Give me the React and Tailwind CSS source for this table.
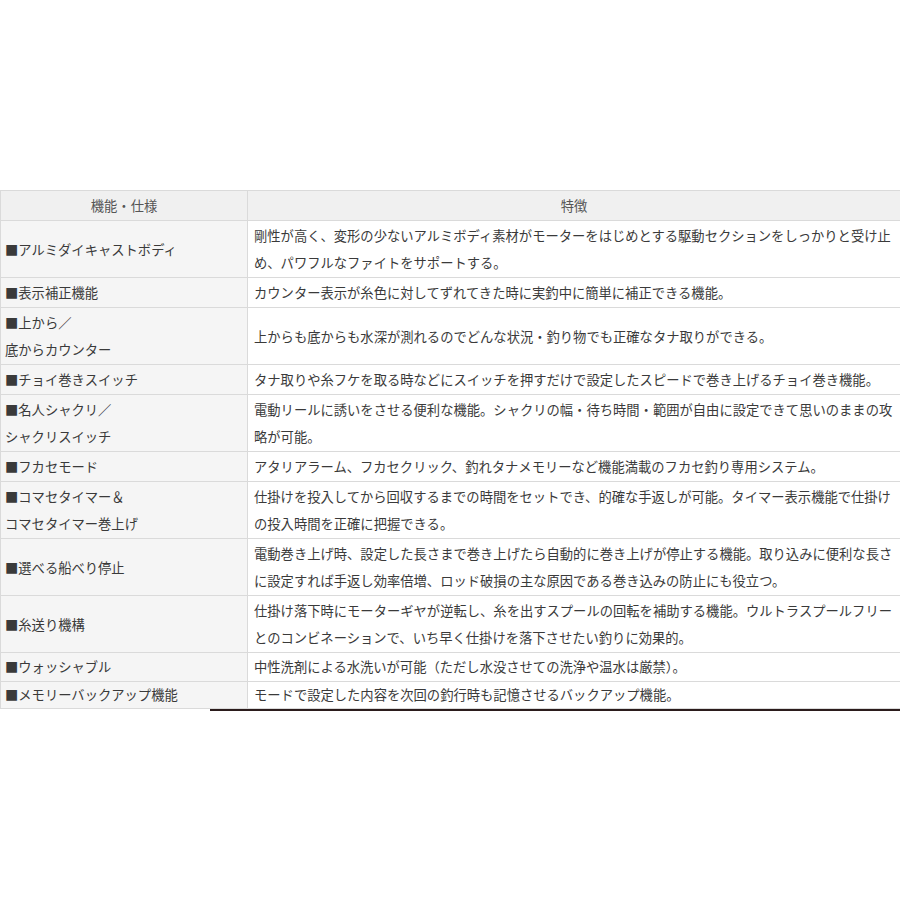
import React from "react";

const rows = [
  [["■アルミダイキャストボディ"], ["剛性が高く、変形の少ないアルミボディ素材がモーターをはじめとする駆動セクションをしっかりと受け止", "め、パワフルなファイトをサポートする。"]],
  [["■表示補正機能"], ["カウンター表示が糸色に対してずれてきた時に実釣中に簡単に補正できる機能。"]],
  [["■上から／", "底からカウンター"], ["上からも底からも水深が測れるのでどんな状況・釣り物でも正確なタナ取りができる。"]],
  [["■チョイ巻きスイッチ"], ["タナ取りや糸フケを取る時などにスイッチを押すだけで設定したスピードで巻き上げるチョイ巻き機能。"]],
  [["■名人シャクリ／", "シャクリスイッチ"], ["電動リールに誘いをさせる便利な機能。シャクリの幅・待ち時間・範囲が自由に設定できて思いのままの攻", "略が可能。"]],
  [["■フカセモード"], ["アタリアラーム、フカセクリック、釣れタナメモリーなど機能満載のフカセ釣り専用システム。"]],
  [["■コマセタイマー＆", "コマセタイマー巻上げ"], ["仕掛けを投入してから回収するまでの時間をセットでき、的確な手返しが可能。タイマー表示機能で仕掛け", "の投入時間を正確に把握できる。"]],
  [["■選べる船べり停止"], ["電動巻き上げ時、設定した長さまで巻き上げたら自動的に巻き上げが停止する機能。取り込みに便利な長さ", "に設定すれば手返し効率倍増、ロッド破損の主な原因である巻き込みの防止にも役立つ。"]],
  [["■糸送り機構"], ["仕掛け落下時にモーターギヤが逆転し、糸を出すスプールの回転を補助する機能。ウルトラスプールフリー", "とのコンビネーションで、いち早く仕掛けを落下させたい釣りに効果的。"]],
  [["■ウォッシャブル"], ["中性洗剤による水洗いが可能（ただし水没させての洗浄や温水は厳禁）。"]],
  [["■メモリーバックアップ機能"], ["モードで設定した内容を次回の釣行時も記憶させるバックアップ機能。"]],
];

function Lines({ lines }) {
  return lines.map((l, i) => (
    <div key={i} className="whitespace-nowrap">
      {l}
    </div>
  ));
}

export default function App() {
  return (
    <div
      className="w-[900px] h-[900px] bg-white overflow-hidden pt-[190px] text-[#3a3a3a] text-[13.3px] leading-[27px]"
      style={{ fontFamily: '"Noto Sans CJK JP", "Noto Sans", sans-serif' }}
    >
      <table className="table-fixed w-[900px] border-collapse">
        <colgroup>
          <col className="w-[247px]" />
          <col className="w-[653px]" />
        </colgroup>
        <thead>
          <tr className="bg-[#f0f0f0] text-[#555]">
            <th className="border border-[#dadada] py-px font-normal text-center">機能・仕様</th>
            <th className="border border-[#dadada] py-px font-normal text-center">特徴</th>
          </tr>
        </thead>
        <tbody>
          {rows.map((r, i) => {
            const lh =
              i === rows.length - 1
                ? "leading-[24px]"
                : i === rows.length - 2
                ? "leading-[26px]"
                : "leading-[27px]";
            return (
              <tr key={i} className={lh}>
                <td className="bg-[#f5f5f5] border border-[#dadada] py-px pl-[4px] pr-1 align-middle">
                  <Lines lines={r[0]} />
                </td>
                <td className="bg-white border border-[#dadada] py-px pl-[6px] pr-[6px] align-middle">
                  <Lines lines={r[1]} />
                </td>
              </tr>
            );
          })}
        </tbody>
      </table>
      <div className="ml-[210px] h-[2px] bg-[#2b1c1c]" />
    </div>
  );
}
